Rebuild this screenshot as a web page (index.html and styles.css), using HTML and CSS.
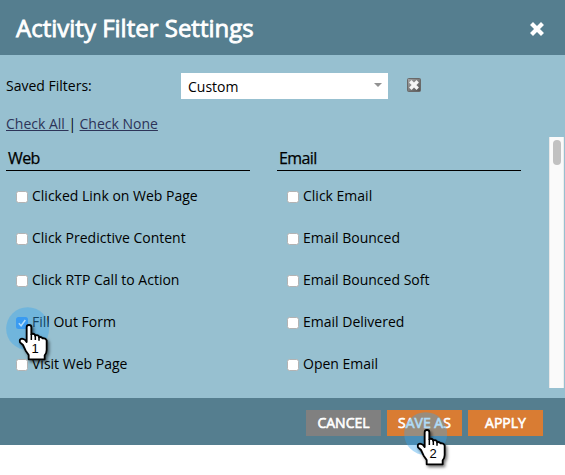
FILE: index.html
```html
<!DOCTYPE html>
<html lang="en">
<head>
<meta charset="utf-8">
<title>Activity Filter Settings</title>
<link rel="stylesheet" href="styles.css">
</head>
<body>
<svg width="0" height="0" class="defs">
  <defs>
    <filter id="shadow" x="-20%" y="-20%" width="150%" height="150%">
      <feDropShadow dx="5" dy="6" stdDeviation="4" flood-color="#000" flood-opacity=".55"/>
    </filter>
    <symbol id="hand" viewBox="72 36 144 180">
      <circle cx="137" cy="101" r="64.5" fill="#36a6ee" fill-opacity=".4"/>
      <path filter="url(#shadow)" d="M134 141V97q0-7 7-7t7 7v21q5-4 11 1v3q6-4 12 2v3q6-3 11 3 9-1 12 6v29q0 9-6 16v12h-48v-13l-9-13-8-17-9-8q-3-10 6-11 9 1 14 10z" fill="#fff" stroke="#000" stroke-width="5.500" stroke-linejoin="round"/>
      <path d="M148 117v18M160 122v13M171 127v10" fill="none" stroke="#000" stroke-width="4.500"/>
    </symbol>
  </defs>
</svg>
<div class="dialog">
  <header class="header">
    <h1>Activity Filter Settings</h1>
    <svg class="close" viewBox="0 0 14 14"><path d="M3 3l8 8M11 3l-8 8" stroke="#fff" stroke-width="4.200" stroke-linecap="square" stroke-linejoin="round"/></svg>
  </header>
  <main class="body">
    <div class="saved">
      <span class="saved-label">Saved Filters:</span>
      <div class="select"><span>Custom</span><i class="arrow"></i></div>
      <svg class="delete" viewBox="0 0 14 14">
        <defs><linearGradient id="g" x2="1" y2="1"><stop stop-color="#a8a8a8"/><stop offset="1" stop-color="#505050"/></linearGradient></defs>
        <rect x=".5" y=".5" width="13" height="13" rx="1" fill="url(#g)" stroke="#696969"/>
        <path d="M4.500 4.500l5 5M9.500 4.500l-5 5" stroke="#f5f5f5" stroke-width="3.400" stroke-linecap="square"/>
      </svg>
    </div>
    <div class="links"><a>Check All </a><span class="bar">|</span><a>Check None</a></div>
    <div class="list">
      <section class="column">
        <h2>Web</h2>
        <label><i class="box"></i><span>Clicked Link on Web Page</span></label>
        <label><i class="box"></i><span>Click Predictive Content</span></label>
        <label><i class="box"></i><span>Click RTP Call to Action</span></label>
        <label><i class="box checked"><svg viewBox="0 0 12 12"><path d="M2.800 6.200l2.300 2.500 4.200-5.700" fill="none" stroke="#fff" stroke-width="1.500"/></svg></i><span>Fill Out Form</span></label>
        <label><i class="box"></i><span>Visit Web Page</span></label>
      </section>
      <section class="column">
        <h2>Email</h2>
        <label><i class="box"></i><span>Click Email</span></label>
        <label><i class="box"></i><span>Email Bounced</span></label>
        <label><i class="box"></i><span>Email Bounced Soft</span></label>
        <label><i class="box"></i><span>Email Delivered</span></label>
        <label><i class="box"></i><span>Open Email</span></label>
      </section>
      <div class="scroll"><i class="thumb"></i></div>
    </div>
  </main>
  <footer class="footer">
    <div class="button cancel">CANCEL</div>
    <div class="button">SAVE AS</div>
    <div class="button">APPLY</div>
  </footer>
</div>
<div class="pointer first"><svg><use href="#hand"/></svg><span>1</span></div>
<div class="pointer second"><svg><use href="#hand"/></svg><span>2</span></div>
</body>
</html>
```
FILE: styles.css
```css
* { box-sizing: border-box; }
body {
  margin: 0;
  background: #fff;
  color: #000;
  font: 14px/20px "Open Sans", sans-serif;
  overflow: hidden;
  position: relative;
  height: 475px;
}
.defs { position: absolute; }
.dialog { width: 565px; height: 445px; display: flex; flex-direction: column; }
.header {
  height: 55px;
  background: #557e8f;
  display: flex;
  align-items: center;
  justify-content: space-between;
  padding: 2px 21px 0 16px;
}
h1 {
  margin: -2px 0 0;
  color: #fff;
  font-size: 24px;
  line-height: 32px;
  font-weight: 400;
  -webkit-text-stroke: .8px #fff;
  white-space: nowrap;
}
.close { width: 14px; height: 14px; margin-top: 1px; }
.body { height: 343px; background: #97c0d0; padding-top: 18px; }
.saved { height: 26px; display: flex; align-items: center; padding-left: 6px; }
.saved-label { width: 175px; }
.select {
  width: 207px;
  height: 26px;
  background: #fff;
  display: flex;
  align-items: center;
  justify-content: space-between;
  padding: 2px 6px 0 7px;
}
.arrow {
  border: 4px solid transparent;
  border-top-color: #929292;
  border-bottom: 0;
  margin-top: -4px;
}
.delete { width: 14px; height: 14px; margin: -2px 0 0 19px; }
.links { height: 20px; margin: 15px 0 0 6px; display: flex; white-space: pre; }
.links a { color: #2d3458; text-decoration: underline; }
.bar { width: 12px; margin-left: -1px; padding-left: 1px; }
.list { height: 251px; margin-top: 3px; padding-left: 6px; display: flex; }
.column { width: 244px; margin-right: 27px; }
h2 {
  height: 34px;
  margin: 0;
  padding: 11px 0 0 2px;
  border-bottom: 1px solid #000;
  font-size: 16px;
  line-height: 20px;
  font-weight: 400;
  letter-spacing: -.6px;
  -webkit-text-stroke: .25px #000;
}
label { height: 20px; margin: 15px 0 22px; padding-left: 10px; display: flex; }
label + label { margin-top: 0; }
.box {
  width: 12px;
  height: 12px;
  margin: 5px 4px 0 0;
  background: #fff;
  border: 1px solid #b3b3b3;
  border-radius: 2.5px;
}
.checked { background: #3c94f4; border: 0; }
.checked svg { display: block; width: 12px; height: 12px; }
.scroll {
  width: 15px;
  height: 251px;
  margin-left: 1px;
  padding: 3px 3px;
  background: #fafafa;
  border-left: 1px solid #e8e8e8;
  border-right: 1px solid #ededed;
}
.thumb { display: block; width: 8px; height: 25px; border-radius: 4px; background: #c1c1c1; }
.footer {
  height: 47px;
  background: #557e8f;
  display: flex;
  gap: 6px;
  justify-content: flex-end;
  padding: 12px 22px 0 0;
}
.button {
  width: 75px;
  height: 26px;
  background: #d97c33;
  color: #fff;
  text-align: center;
  line-height: 26px;
  -webkit-text-stroke: .6px #fff;
}
.cancel { background: #808080; }
.pointer { position: absolute; width: 48px; height: 60px; }
.pointer svg { display: block; width: 48px; height: 60px; }
.pointer span {
  position: absolute;
  left: 23px;
  top: 35px;
  width: 12px;
  text-align: center;
  font: 13px/14px "Liberation Sans", sans-serif;
}
.first { left: 6px; top: 307px; }
.second { left: 404px; top: 412px; }
```
